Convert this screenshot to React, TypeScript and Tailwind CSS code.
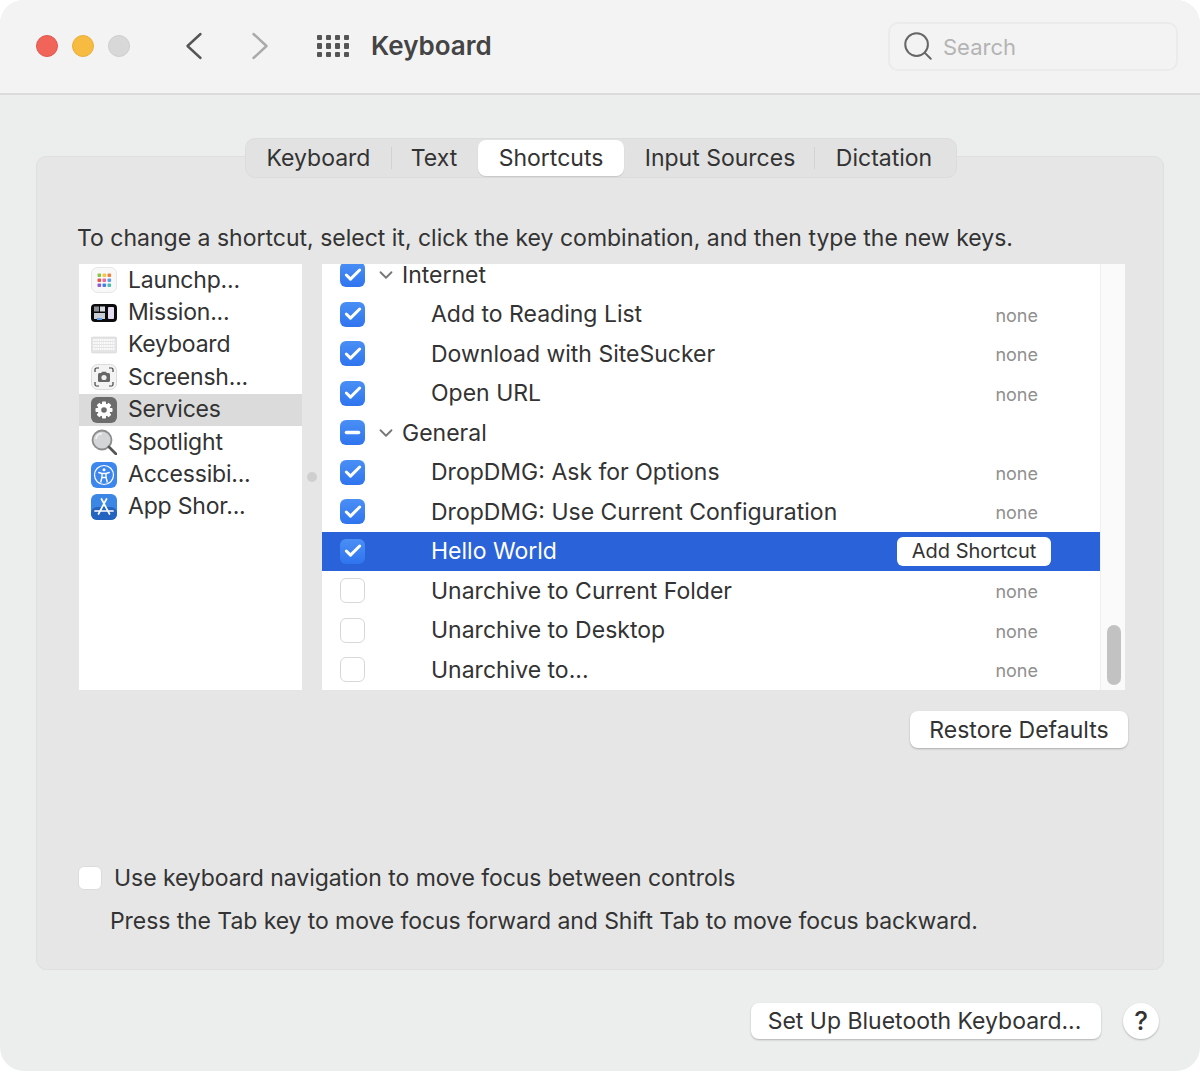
import { Check, ChevronDown, Minus, Search } from "lucide-react";

const SIDEBAR = ["Launchp...", "Mission...", "Keyboard", "Screensh...", "Services", "Spotlight", "Accessibi...", "App Shor..."];

type RowData = {
  label: string;
  state: "on" | "off" | "mixed";
  group?: boolean;
  selected?: boolean;
};

const ROWS: RowData[] = [
  { label: "Internet", state: "on", group: true },
  { label: "Add to Reading List", state: "on" },
  { label: "Download with SiteSucker", state: "on" },
  { label: "Open URL", state: "on" },
  { label: "General", state: "mixed", group: true },
  { label: "DropDMG: Ask for Options", state: "on" },
  { label: "DropDMG: Use Current Configuration", state: "on" },
  { label: "Hello World", state: "on", selected: true },
  { label: "Unarchive to Current Folder", state: "off" },
  { label: "Unarchive to Desktop", state: "off" },
  { label: "Unarchive to...", state: "off" },
];

function SidebarIcon({ index }: { index: number }) {
  if (index === 0) {
    const colors = ["#8bc34a", "#f5c542", "#f0803c", "#e5534b", "#e86a9a", "#5aa0e8", "#8a5ad8", "#4a7ee0", "#4cc0b0"];
    return (
      <svg viewBox="0 0 26 26" className="w-[26px] h-[26px]">
        <rect x="0.5" y="0.5" width="25" height="25" rx="6" fill="#f8f8f8" stroke="#e6e6e6" />
        {colors.map((c, i) => (
          <rect key={c} x={6.5 + (i % 3) * 5} y={6.5 + Math.floor(i / 3) * 5} width="3.6" height="3.6" rx="1" fill={c} />
        ))}
      </svg>
    );
  }
  if (index === 1) {
    return (
      <svg viewBox="0 0 26 26" className="w-[26px] h-[26px]">
        <rect x="0" y="4" width="26" height="18" rx="4" fill="#0b0b0d" />
        <rect x="3" y="6.500" width="5" height="5" fill="#8d9096" />
        <rect x="9" y="6.500" width="5" height="5" fill="#d8dbe2" />
        <rect x="3" y="13" width="11" height="6" fill="#c9ced6" />
        <rect x="6" y="18" width="5" height="2" fill="#5a9be8" />
        <rect x="17" y="7" width="6" height="12" rx="1" fill="#e6dcf2" />
      </svg>
    );
  }
  if (index === 2) {
    return (
      <svg viewBox="0 0 26 26" className="w-[26px] h-[26px]">
        <rect x="0" y="5" width="26" height="16" rx="2" fill="#e4e4e4" stroke="#d4d4d4" strokeWidth="0.6" />
        {[8, 11, 14, 17].map((y) => (
          <line key={y} x1="2" x2="24" y1={y} y2={y} stroke="#fbfbfb" strokeWidth="1.8" strokeDasharray="1.6 0.6" />
        ))}
      </svg>
    );
  }
  if (index === 3) {
    return (
      <svg viewBox="0 0 26 26" className="w-[26px] h-[26px]" fill="none">
        <rect x="0.5" y="0.5" width="25" height="25" rx="6" fill="#f3f3f3" stroke="#dcdcdc" />
        <path d="M4 8V5.5A1.5 1.5 0 0 1 5.5 4H8M18 4h2.5A1.5 1.5 0 0 1 22 5.5V8M22 18v2.5a1.5 1.5 0 0 1-1.5 1.5H18M8 22H5.5A1.5 1.5 0 0 1 4 20.500V18" stroke="#444" strokeWidth="1.2" />
        <rect x="7" y="9" width="12" height="9" rx="1.5" fill="#666" />
        <circle cx="13" cy="13.500" r="2.600" fill="#eee" />
        <rect x="10.500" y="7.800" width="5" height="2" rx="0.6" fill="#666" />
      </svg>
    );
  }
  if (index === 4) {
    return (
      <svg viewBox="0 0 26 26" className="w-[26px] h-[26px]">
        <rect x="0" y="0" width="26" height="26" rx="6" fill="#6c6c6c" />
        <g fill="#fff">
          <circle cx="13" cy="13" r="6.500" />
          {[0, 45, 90, 135].map((a) => (
            <rect key={a} x="11" y="4.500" width="4" height="17" rx="0.8" transform={`rotate(${a} 13 13)`} />
          ))}
        </g>
        <circle cx="13" cy="13" r="2.800" fill="#6c6c6c" />
      </svg>
    );
  }
  if (index === 5) {
    return (
      <svg viewBox="0 0 26 26" className="w-[26px] h-[26px]">
        <circle cx="11" cy="11" r="9.500" fill="#d3d5d6" stroke="#8c8c8c" strokeWidth="1.800" />
        <path d="M5 10a6.500 6.500 0 0 1 6-5.500" fill="none" stroke="#f5f5f5" strokeWidth="1.500" />
        <line x1="18" y1="18" x2="25" y2="25" stroke="#555" strokeWidth="2.800" strokeLinecap="round" />
      </svg>
    );
  }
  if (index === 6) {
    return (
      <svg viewBox="0 0 26 26" className="w-[26px] h-[26px]" fill="none">
        <rect x="0" y="0" width="26" height="26" rx="6" fill="#3d86ee" />
        <circle cx="13" cy="13" r="9.500" stroke="#fff" strokeWidth="1.200" />
        <circle cx="13" cy="7.800" r="1.500" fill="#fff" />
        <path d="M7.800 10.500 11 11.500V15l-1.200 5M18.200 10.500 15 11.500V15l1.200 5M11 11.500h4M11.500 15.500h3" stroke="#fff" strokeWidth="1.400" strokeLinecap="round" strokeLinejoin="round" />
      </svg>
    );
  }
  return (
    <svg viewBox="0 0 26 26" className="w-[26px] h-[26px]" fill="none">
      <rect x="0" y="0" width="26" height="26" rx="6" fill="#3c87e6" />
      <rect x="0" y="13" width="26" height="13" rx="6" fill="#2463c0" />
      <path d="M10.500 5 18.500 20M15.500 5 7.500 20M4 17h18" stroke="#fff" strokeWidth="1.700" strokeLinecap="round" />
    </svg>
  );
}

function Checkbox({ state }: { state: RowData["state"] }) {
  if (state === "off") {
    return <div className="w-[25px] h-[25px] shrink-0 rounded-[6px] bg-white border border-[#d8d8d8]" />;
  }
  return (
    <div className="w-[25px] h-[25px] shrink-0 rounded-[6px] bg-gradient-to-b from-[#4a8ff5] to-[#2f74ee] flex items-center justify-center">
      {state === "on" ? (
        <Check className="w-[20px] h-[20px] text-white" strokeWidth={3.6} />
      ) : (
        <Minus className="w-[21px] h-[21px] text-white" strokeWidth={3.8} />
      )}
    </div>
  );
}

function ShortcutRow({ row }: { row: RowData }) {
  return (
    <div className={`h-[39.500px] shrink-0 flex items-center pl-[18px] ${row.selected ? "bg-[#2a62d9] text-white" : "text-[#333333]"}`}>
      <Checkbox state={row.state} />
      {row.group ? (
        <>
          <ChevronDown className="w-[22px] h-[22px] ml-[10px] mr-[5px] text-[#777777]" strokeWidth={2} />
          <span>{row.label}</span>
        </>
      ) : (
        <span className="ml-[66px]">{row.label}</span>
      )}
      {row.selected ? (
        <div className="ml-auto mr-[49px] h-[29px] w-[154px] pb-px rounded-[6px] bg-white text-[#333333] text-[20px] flex items-center justify-center">
          Add Shortcut
        </div>
      ) : (
        !row.group && <span className="ml-auto mr-[62px] mt-[3px] text-[18px] text-[#8f8f8f]">none</span>
      )}
    </div>
  );
}

export default function App() {
  return (
    <div className="w-[1200px] h-[1071px] bg-white font-['Inter',sans-serif] text-[23px] leading-[34px] text-[#333333]">
      <div className="h-full rounded-[24px] overflow-hidden bg-[#eceded] flex flex-col">
        {/* Title bar */}
        <div className="h-[95px] shrink-0 flex items-center pl-[36px] pr-[22px] pb-px bg-[#f3f3f3] border-b-2 border-[#dbdbdb]">
          <div className="flex gap-[14px]">
            <div className="w-[22px] h-[22px] rounded-full bg-[#f0645a] border border-[#e0574e]" />
            <div className="w-[22px] h-[22px] rounded-full bg-[#f6bb40] border border-[#e9ae38]" />
            <div className="w-[22px] h-[22px] rounded-full bg-[#d8d8d8] border border-[#cecece]" />
          </div>
          <svg viewBox="0 0 18 28" className="ml-[55px] w-[18px] h-[28px]" fill="none">
            <path d="M15.500 2 2.500 14l13 12" stroke="#555555" strokeWidth="2.400" strokeLinecap="round" strokeLinejoin="round" />
          </svg>
          <svg viewBox="0 0 18 28" className="ml-[48px] w-[18px] h-[28px]" fill="none">
            <path d="M2.500 2l13 12-13 12" stroke="#aaaaaa" strokeWidth="2.400" strokeLinecap="round" strokeLinejoin="round" />
          </svg>
          <div className="ml-[48px] grid grid-cols-4 gap-x-[4px] gap-y-[3px]">
            {Array.from({ length: 12 }).map((_, i) => (
              <div key={i} className="w-[5px] h-[5.500px] rounded-[1px] bg-[#555555]" />
            ))}
          </div>
          <div className="ml-[22px] text-[26px] font-semibold text-[#444444]">Keyboard</div>
          <div className="ml-auto w-[290px] h-[49px] rounded-[10px] border-2 border-[#ebebeb] bg-[#f3f3f3] flex items-center pl-[11px] gap-[8px]">
            <Search className="w-[34px] h-[34px] text-[#666666]" strokeWidth={1.400} />
            <span className="text-[#b4b4b4] text-[22px] mt-[2px]">Search</span>
          </div>
        </div>

        {/* Tabs */}
        <div className="relative z-10 self-start ml-[245px] mt-[43px] w-[712px] h-[40px] rounded-[10px] bg-[#e2e2e2] border border-[#dcdcdc] flex items-center">
          <div className="w-[145px] text-center">Keyboard</div>
          <div className="w-px h-[22px] bg-[#d2d2d2]" />
          <div className="w-[86px] text-center pr-[2px]">Text</div>
          <div className="w-[146px] h-[36px] rounded-[8px] bg-white flex items-center justify-center shadow-[0_1px_1px_rgba(0,0,0,0.12)]">Shortcuts</div>
          <div className="w-[190px] text-center pl-[2px]">Input Sources</div>
          <div className="w-px h-[22px] bg-[#d2d2d2]" />
          <div className="flex-1 text-center pr-[3px]">Dictation</div>
        </div>

        {/* Group box */}
        <div className="mx-[36px] -mt-[22px] h-[814px] shrink-0 rounded-[10px] bg-[#e6e6e6] border border-[#dfdfdf] pt-[67px] pl-[41px] pr-[35px] flex flex-col">
          <div className="h-[28px] leading-[28px] -ml-px">To change a shortcut, select it, click the key combination, and then type the new keys.</div>

          <div className="mt-[12px] ml-px mr-[3px] h-[426px] flex">
            <div className="w-[223px] bg-white flex flex-col">
              {SIDEBAR.map((name, i) => (
                <div key={name} className={`h-[32.400px] shrink-0 flex items-center pl-[12px] gap-[11px] ${name === "Services" ? "bg-[#dbdbdb]" : ""}`}>
                  <SidebarIcon index={i} />
                  <span className="tracking-[-0.2px] -mt-px">{name}</span>
                </div>
              ))}
            </div>
            <div className="w-[20px] flex items-center justify-center">
              <div className="w-[10px] h-[10px] rounded-full bg-[#cfcfcf]" />
            </div>
            <div className="flex-1 flex bg-white overflow-hidden">
              <div className="flex-1 flex flex-col -mt-[9px]">
                {ROWS.map((row) => (
                  <ShortcutRow key={row.label} row={row} />
                ))}
              </div>
              <div className="w-[25px] bg-[#fafafa] border-l border-[#efefef] flex flex-col justify-end items-center pl-px pb-[5px]">
                <div className="w-[14px] h-[60px] rounded-full bg-[#c2c2c2]" />
              </div>
            </div>
          </div>

          <div className="mt-[21px] self-end w-[218px] h-[37px] rounded-[8px] bg-white flex items-center justify-center shadow-[0_1px_2px_rgba(0,0,0,0.25)]">
            Restore Defaults
          </div>

          <div className="mt-[113px] flex items-center gap-[12px] tracking-[-0.06px]">
            <div className="w-[24px] h-[24px] rounded-[6px] bg-white border border-[#dcdcdc]" />
            <span>Use keyboard navigation to move focus between controls</span>
          </div>
          <div className="mt-[9px] ml-[32px] tracking-[-0.08px]">Press the Tab key to move focus forward and Shift Tab to move focus backward.</div>
        </div>

        {/* Footer */}
        <div className="mt-[33px] pr-[41px] flex justify-end items-center gap-[22px]">
          <div className="w-[350px] h-[36px] pr-[3px] rounded-[8px] bg-white flex items-center justify-center shadow-[0_1px_2px_rgba(0,0,0,0.25)]">
            Set Up Bluetooth Keyboard...
          </div>
          <div className="w-[36px] h-[36px] rounded-full bg-white flex items-center justify-center text-[26px] font-medium shadow-[0_1px_2px_rgba(0,0,0,0.25)]">?</div>
        </div>
      </div>
    </div>
  );
}
